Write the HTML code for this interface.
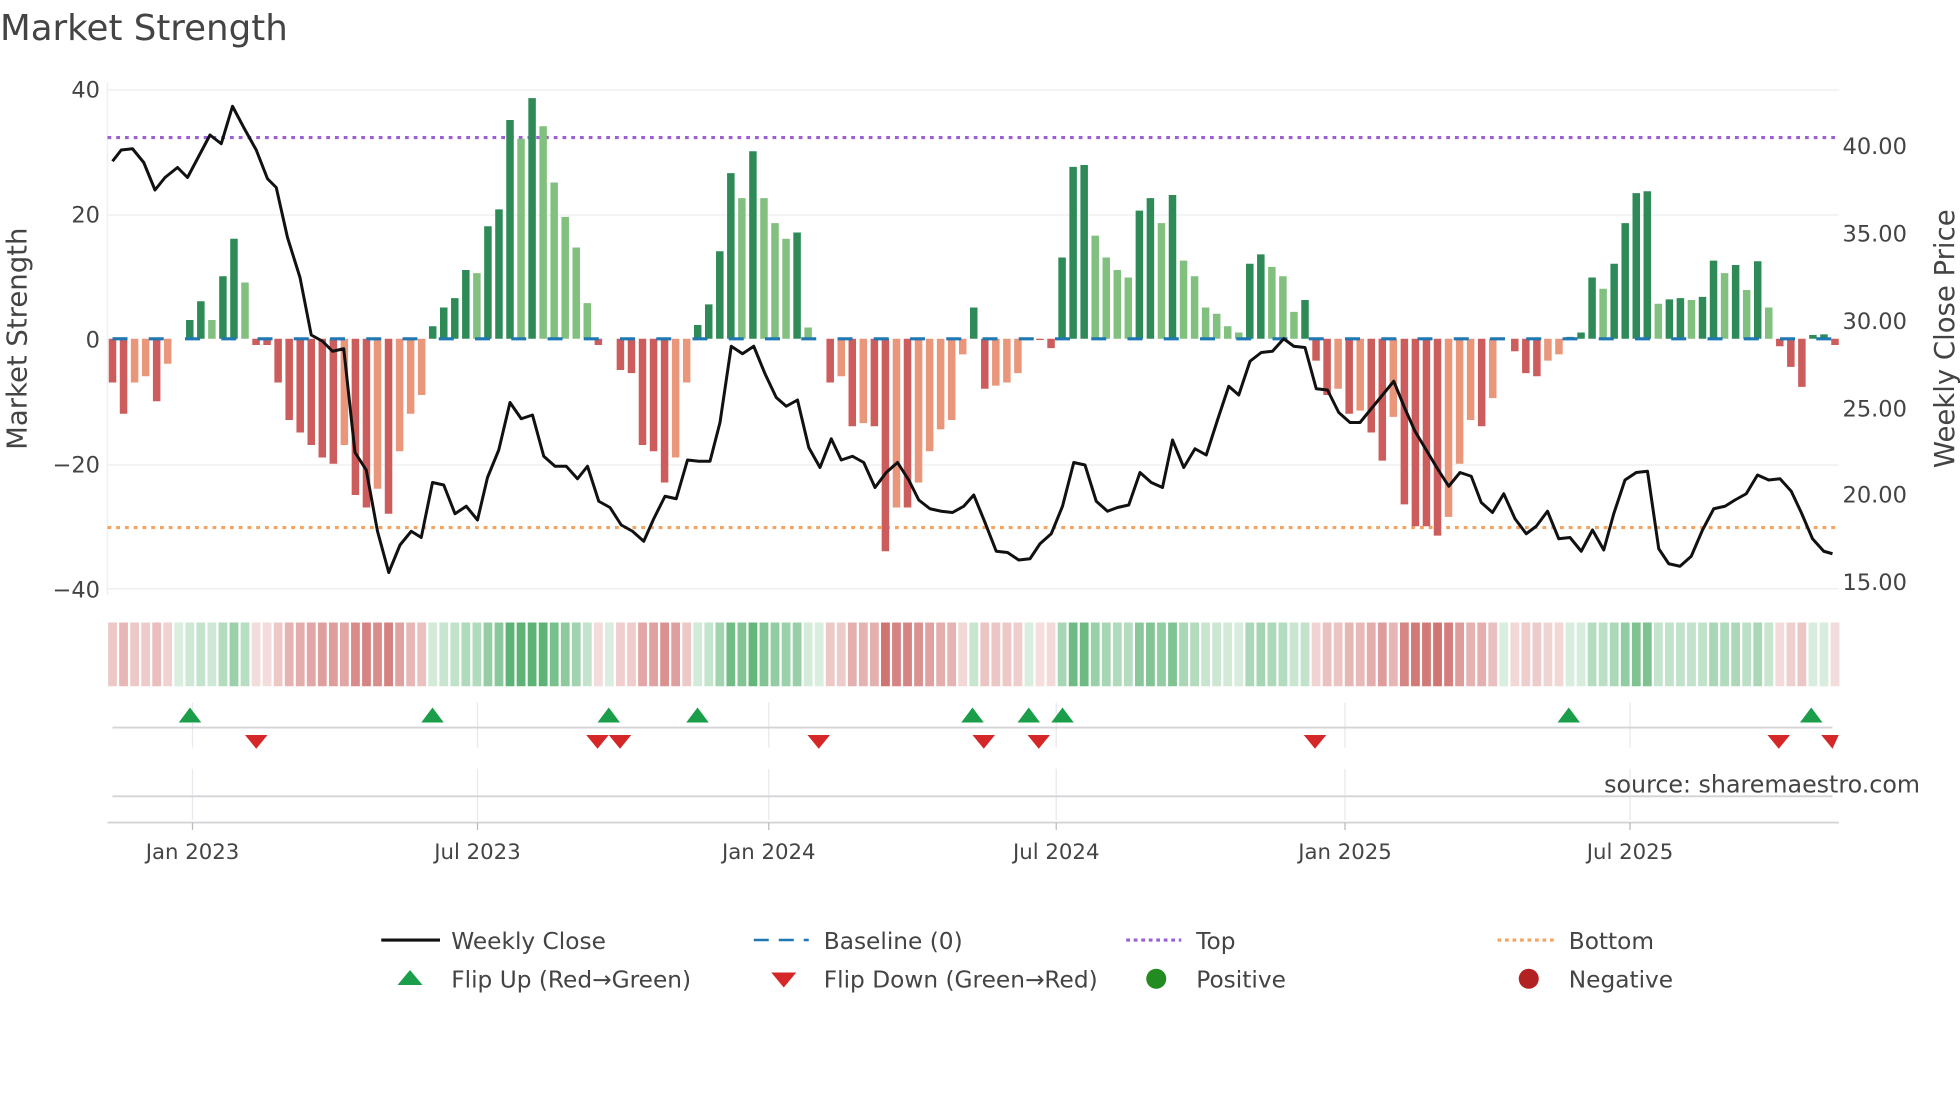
<!DOCTYPE html>
<html><head><meta charset="utf-8"><style>
html,body{margin:0;padding:0;background:#fff;}
svg{display:block;}
text{font-family:"DejaVu Sans","Liberation Sans",sans-serif;fill:#444;}
</style></head><body>
<svg id="s" width="1960" height="1102" viewBox="0 0 1568 881.6" xmlns="http://www.w3.org/2000/svg">
<rect width="1568" height="882" fill="#fff"/>
<text x="0" y="32" font-size="28.5" fill="#333">Market Strength</text>
<g id="grid" stroke="#eef0f4" stroke-width="1.2">
<line x1="86" x2="1471" y1="72" y2="72"/><line x1="86" x2="1471" y1="172" y2="172"/>
<line x1="86" x2="1471" y1="372" y2="372"/><line x1="86" x2="1471" y1="471" y2="471"/>
<line x1="86" x2="86" y1="66" y2="476"/>
</g>
<g font-size="18" text-anchor="end">
<text x="80" y="78">40</text><text x="80" y="178">20</text><text x="80" y="278">0</text>
<text x="80" y="378">−20</text><text x="80" y="478">−40</text>
</g>
<g font-size="18">
<text x="1474" y="123">40.00</text><text x="1474" y="193">35.00</text><text x="1474" y="263">30.00</text>
<text x="1474" y="333">25.00</text><text x="1474" y="402">20.00</text><text x="1474" y="472">15.00</text>
</g>
<text transform="translate(21,271) rotate(-90)" font-size="22" text-anchor="middle">Market Strength</text>
<text transform="translate(1563,271) rotate(-90)" font-size="22" text-anchor="middle">Weekly Close Price</text>
<line x1="86" x2="1471" y1="110" y2="110" stroke="#9b5fd6" stroke-width="2.5" stroke-dasharray="3,4"/>
<line x1="86" x2="1471" y1="422" y2="422" stroke="#f4a460" stroke-width="2.5" stroke-dasharray="3,4"/>
<g id="bars"></g>
<line x1="90" x2="1471" y1="271" y2="271" stroke="#1f77b4" stroke-width="2.5" stroke-dasharray="12,17"/>
<polyline id="price" fill="none" stroke="#111" stroke-width="2.4" stroke-linejoin="round"/>
<g id="heat"></g>
<g stroke="#e8e8ee" stroke-width="1">
<line x1="154" x2="154" y1="562" y2="598"/><line x1="382" x2="382" y1="562" y2="598"/><line x1="615" x2="615" y1="562" y2="598"/>
<line x1="845" x2="845" y1="562" y2="598"/><line x1="1076" x2="1076" y1="562" y2="598"/><line x1="1304" x2="1304" y1="562" y2="598"/>
<line x1="154" x2="154" y1="615" y2="656"/><line x1="382" x2="382" y1="615" y2="656"/><line x1="615" x2="615" y1="615" y2="656"/>
<line x1="845" x2="845" y1="615" y2="656"/><line x1="1076" x2="1076" y1="615" y2="656"/><line x1="1304" x2="1304" y1="615" y2="656"/>
</g>
<line x1="90" x2="1466" y1="582" y2="582" stroke="#d4d4d8" stroke-width="1.5"/>
<line x1="90" x2="1466" y1="637" y2="637" stroke="#d4d4d8" stroke-width="1.5"/>
<line x1="86" x2="1471" y1="658" y2="658" stroke="#d4d4d8" stroke-width="1.5"/>
<g stroke="#bbb" stroke-width="1"><line x1="154" x2="154" y1="658" y2="664"/><line x1="382" x2="382" y1="658" y2="664"/><line x1="615" x2="615" y1="658" y2="664"/><line x1="845" x2="845" y1="658" y2="664"/><line x1="1076" x2="1076" y1="658" y2="664"/><line x1="1304" x2="1304" y1="658" y2="664"/></g>
<g id="marks"></g>
<text x="1536" y="634" font-size="19" fill="#8a8a8a" text-anchor="end">source: sharemaestro.com</text>
<g font-size="17" text-anchor="middle">
<text x="154" y="687">Jan 2023</text><text x="382" y="687">Jul 2023</text><text x="615" y="687">Jan 2024</text>
<text x="845" y="687">Jul 2024</text><text x="1076" y="687">Jan 2025</text><text x="1304" y="687">Jul 2025</text>
</g>
<g font-size="18.6">
<line x1="305" x2="352" y1="752" y2="752" stroke="#111" stroke-width="2.5"/>
<text x="361" y="759">Weekly Close</text>
<line x1="603" x2="647" y1="752" y2="752" stroke="#1f77b4" stroke-width="2" stroke-dasharray="12,8"/>
<text x="659" y="759">Baseline (0)</text>
<line x1="901" x2="945" y1="752" y2="752" stroke="#9b5fd6" stroke-width="2.5" stroke-dasharray="3,3"/>
<text x="957" y="759">Top</text>
<line x1="1198" x2="1243" y1="752" y2="752" stroke="#f4a460" stroke-width="2.5" stroke-dasharray="3,3"/>
<text x="1255" y="759">Bottom</text>
<polygon points="318,788 338,788 328,776" fill="#1a9e4a"/>
<text x="361" y="790">Flip Up (Red→Green)</text>
<polygon points="617,778 637,778 627,790" fill="#d62728"/>
<text x="659" y="790">Flip Down (Green→Red)</text>
<circle cx="925" cy="783" r="8" fill="#228b22"/>
<text x="957" y="790">Positive</text>
<circle cx="1223" cy="783" r="8" fill="#b22222"/>
<text x="1255" y="790">Negative</text>
</g>
</svg>
<script>
var v=[-7,-12,-7,-6,-10,-4,0,3,6,3,10,16,9,-1,-1,-7,-13,-15,-17,-19,-20,-17,-25,-27,-24,-28,-18,-12,-9,2,5,6.5,11,10.5,18,20.7,35,32,38.5,34,25,19.5,14.6,5.7,-1,0,-5,-5.5,-17,-18,-23,-19,-7,2.2,5.5,14,26.5,22.5,30,22.5,18.5,16,17,1.8,0,-7,-6,-14,-13.5,-14,-34,-27,-27,-23,-18,-14.5,-13,-2.5,5,-8,-7.5,-7,-5.5,0,-0.2,-1.5,13,27.5,27.8,16.5,13,11,9.8,20.5,22.5,18.5,23,12.5,10,5,4,2,1,12,13.5,11.5,10,4.3,6.2,-3.5,-9,-8,-12,-11.5,-15,-19.5,-12.5,-26.5,-30,-30,-31.5,-28.5,-20,-13,-14,-9.5,0,-2,-5.5,-6,-3.5,-2.5,0.3,1,9.8,8,12,18.5,23.3,23.6,5.6,6.3,6.5,6.2,6.7,12.5,10.5,11.8,7.8,12.4,5,-1.2,-4.5,-7.7,0.6,0.7,-1];
var N=v.length,step=(1468-90)/(N-1),ns="http://www.w3.org/2000/svg";
function el(t,a,p){var e=document.createElementNS(ns,t);for(var k in a)e.setAttribute(k,a[k]);p.appendChild(e);return e;}
var bars=document.getElementById('bars'),heat=document.getElementById('heat');
for(var i=0;i<N;i++){var x=90+i*step,val=v[i];
 var light=i>0&&Math.abs(val)<Math.abs(v[i-1])&&val*v[i-1]>0;
 var c=val>=0?(light?'#82c07f':'#2e8b57'):(light?'#e9967a':'#cd5c5c');
 if(Math.abs(val)>0.05){var y1=271-val*5;el('rect',{x:x-3,y:Math.min(y1,271),width:6,height:Math.abs(val*5),fill:c},bars);}
 var m=Math.min(1,Math.abs(val)/32)*0.62+0.18;
 var base=val>=0?[52,160,82]:[196,80,78];
 var col='rgb('+base.map(function(b){return Math.round(255-(255-b)*m);}).join(',')+')';
 el('rect',{x:x-4.4+0.9,y:498,width:step-1.8,height:51,fill:col},heat);}
var P=[[90,129],[97,120],[106,119],[115,130],[124,152],[132,142],[142,134],[150,142],[159,125],[168,108],[177,115],[186,85],[195,102],[205,120],[214,143],[221,150],[230,190],[240,222],[249,268],[258,273],[266,281],[275,279],[284,362],[293,376],[302,425],[311,458],[320,436],[329,425],[337,430],[346,386],[355,388],[364,411],[373,405],[382,416],[390,382],[399,360],[408,322],[417,335],[426,332],[435,365],[444,373],[453,373],[462,383],[470,373],[479,401],[488,406],[497,420],[506,425],[515,433],[523,415],[532,397],[541,399],[550,368],[559,369],[568,369],[576,338],[585,277],[594,283],[603,277],[612,299],[621,318],[629,325],[638,320],[647,358],[656,374],[665,351],[673,368],[682,365],[691,370],[700,390],[709,378],[718,370],[727,384],[735,400],[744,407],[753,409],[762,410],[771,405],[779,396],[788,418],[797,441],[806,442],[815,448],[824,447],[832,435],[841,427],[850,405],[859,370],[868,372],[877,401],[886,409],[894,406],[903,404],[912,378],[921,386],[930,390],[938,352],[947,374],[956,359],[965,364],[974,336],[983,309],[991,316],[1000,289],[1009,282],[1018,281],[1027,271],[1035,277],[1044,278],[1053,311],[1062,312],[1071,330],[1080,338],[1088,338],[1097,327],[1106,316],[1115,305],[1124,327],[1132,345],[1141,360],[1150,375],[1159,389],[1168,378],[1177,381],[1185,402],[1194,410],[1203,395],[1212,415],[1221,427],[1229,421],[1238,409],[1247,431],[1256,430],[1265,441],[1274,424],[1283,440],[1291,411],[1300,384],[1309,378],[1318,377],[1327,439],[1335,451],[1344,453],[1353,445],[1362,424],[1371,407],[1380,405],[1388,400],[1397,395],[1406,380],[1415,384],[1424,383],[1433,393],[1441,410],[1450,431],[1459,441],[1466,443]];
document.getElementById('price').setAttribute('points',P.map(function(p){return p.join(',')}).join(' '));
var mk=document.getElementById('marks');
[152,346,487,558,778,823,850,1255,1449].forEach(function(x){el('polygon',{points:(x-9)+',578 '+(x+9)+',578 '+x+',566',fill:'#1a9e4a'},mk);});
[205,478,496,655,787,831,1052,1423,1466].forEach(function(x){var r=Math.min(x+9,1471);el('polygon',{points:(x-9)+',588 '+r+',588 '+x+',599',fill:'#d62728'},mk);});
</script>
</body></html>
